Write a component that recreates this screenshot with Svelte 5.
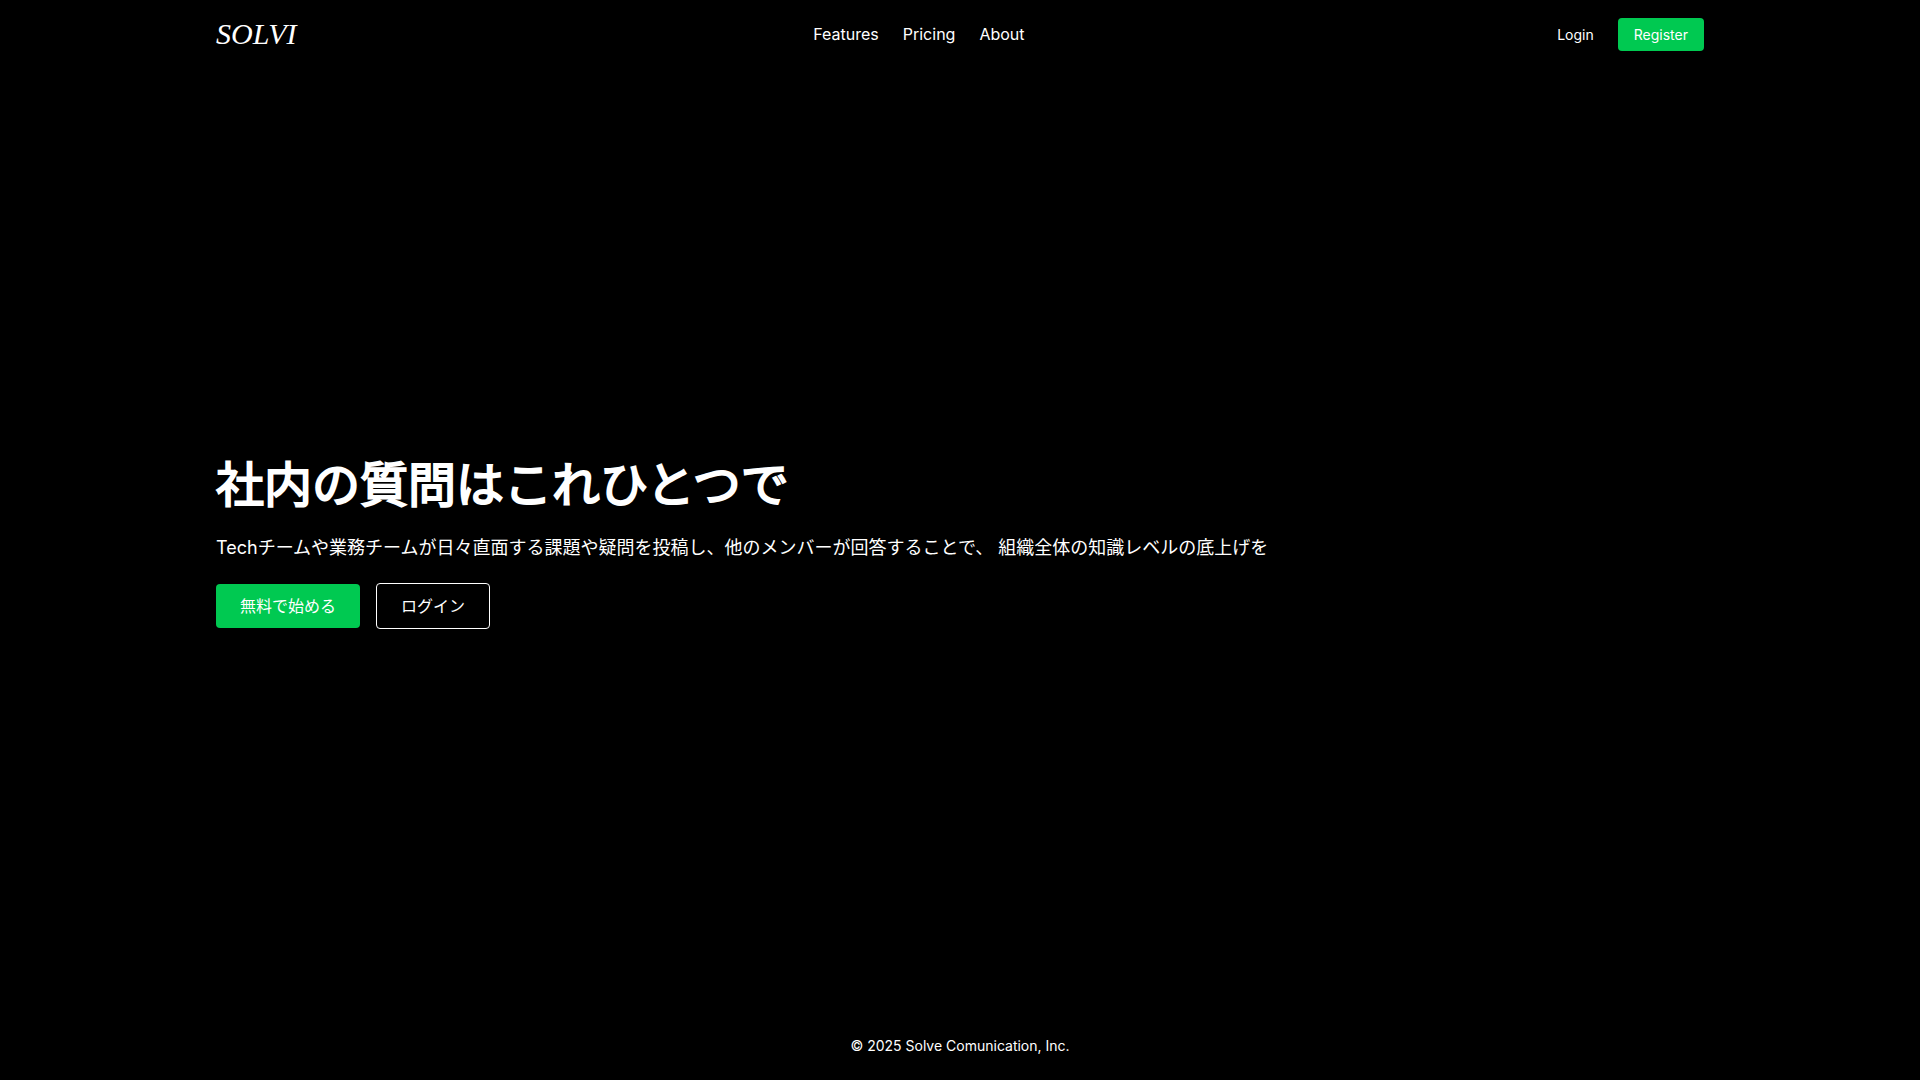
<script>
    const links = ['Features', 'Pricing', 'About'];
</script>

<div class="page">
    <header>
        <a href="/" class="logo">SOLVI</a>
        <nav>
            {#each links as link}
                <a href="/#{link.toLowerCase()}">{link}</a>
            {/each}
        </nav>
        <div class="auth">
            <a href="/login">Login</a>
            <a href="/register" class="register">Register</a>
        </div>
    </header>

    <main>
        <h1>社内の質問はこれひとつで</h1>
        <p>
            Techチームや業務チームが日々直面する課題や疑問を投稿し、他のメンバーが回答することで、
            組織全体の知識レベルの底上げを
        </p>
        <div class="actions">
            <button type="button" class="primary">無料で始める</button>
            <button type="button" class="outline">ログイン</button>
        </div>
    </main>

    <footer>© 2025 Solve Comunication, Inc.</footer>
</div>

<style>
    :global(body) {
        margin: 0;
        background-color: #000;
    }

    .page {
        display: flex;
        flex-direction: column;
        min-height: 100vh;
        color: #fff;
        font-family: Inter, "Noto Sans CJK JP", sans-serif;
        font-size: 16px;
        font-weight: 400;
        line-height: 24px;
    }

    a {
        color: inherit;
        text-decoration: none;
    }

    header,
    main {
        box-sizing: border-box;
        width: 100%;
        max-width: 1536px;
        margin: 0 auto;
        padding: 0 24px;
    }

    header {
        display: flex;
        align-items: center;
        justify-content: space-between;
        padding-top: 16px;
        padding-bottom: 16px;
    }

    .logo {
        font-family: "Liberation Serif", serif;
        font-size: 30px;
        font-style: italic;
        line-height: 36px;
    }

    nav {
        display: flex;
        align-items: center;
        gap: 24px;
    }

    .auth {
        display: flex;
        align-items: center;
        gap: 8px;
        font-size: 14px;
        line-height: 21px;
    }

    .auth a {
        padding: 6px 16px;
        border-radius: 4px;
    }

    .auth .register {
        background-color: #00c951;
    }

    main {
        display: flex;
        flex: 1;
        flex-direction: column;
        justify-content: center;
    }

    h1 {
        margin: 0 0 16px;
        font-size: 48px;
        font-weight: 400;
        line-height: 68px;
        -webkit-text-stroke: 2px #fff;
    }

    p {
        margin: 0 0 22px;
        font-size: 18px;
        line-height: 26px;
    }

    .actions {
        display: flex;
        align-items: center;
        gap: 16px;
    }

    button {
        padding: 10px 24px;
        border: 0;
        border-radius: 4px;
        background: none;
        color: inherit;
        font: inherit;
        cursor: pointer;
    }

    .primary {
        background-color: #00c951;
    }

    .outline {
        border: 1px solid #fff;
    }

    footer {
        padding: 24px;
        font-size: 14px;
        line-height: 20px;
        text-align: center;
    }
</style>
